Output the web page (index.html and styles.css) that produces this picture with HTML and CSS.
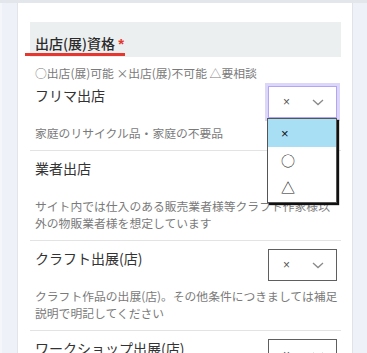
FILE: index.html
```html
<!DOCTYPE html>
<html lang="ja">
<head>
<meta charset="utf-8">
<title>出店(展)資格</title>
<link rel="stylesheet" href="styles.css">
</head>
<body>
<div class="topbar"></div>
<div class="layout">
  <div class="side"></div>
  <main class="card">
    <div class="heading"><span class="heading-text">出店(展)資格 <span class="req">*</span></span></div>
    <p class="note">○出店(展)可能 ×出店(展)不可能 △要相談</p>

    <div class="row first">
      <div class="row-main">
        <div class="label">フリマ出店</div>
        <div class="select-wrap">
          <div class="select focused"><span class="val">×</span><svg class="chev" width="12" height="7" viewBox="0 0 12 7"><path d="M1 1 L6 5.6 L11 1" fill="none" stroke="#8a8a8a" stroke-width="1.3"/></svg></div>
          <ul class="dropdown">
            <li class="opt active"><span class="x">×</span></li>
            <li class="opt">○</li>
            <li class="opt">△</li>
          </ul>
        </div>
      </div>
      <p class="desc">家庭のリサイクル品・家庭の不要品</p>
    </div>

    <div class="row">
      <div class="row-main">
        <div class="label">業者出店</div>
        <div class="select-wrap">
          <div class="select"><span class="val">×</span><svg class="chev" width="12" height="7" viewBox="0 0 12 7"><path d="M1 1 L6 5.6 L11 1" fill="none" stroke="#8a8a8a" stroke-width="1.3"/></svg></div>
        </div>
      </div>
      <p class="desc">サイト内では仕入のある販売業者様等クラフト作家様以外の物販業者様を想定しています</p>
    </div>

    <div class="row">
      <div class="row-main">
        <div class="label">クラフト出展(店)</div>
        <div class="select-wrap">
          <div class="select"><span class="val">×</span><svg class="chev" width="12" height="7" viewBox="0 0 12 7"><path d="M1 1 L6 5.6 L11 1" fill="none" stroke="#8a8a8a" stroke-width="1.3"/></svg></div>
        </div>
      </div>
      <p class="desc">クラフト作品の出展(店)。その他条件につきましては補足説明で明記してください</p>
    </div>

    <div class="row">
      <div class="row-main">
        <div class="label">ワークショップ出展(店)</div>
        <div class="select-wrap">
          <div class="select"><span class="val">×</span><svg class="chev" width="12" height="7" viewBox="0 0 12 7"><path d="M1 1 L6 5.6 L11 1" fill="none" stroke="#8a8a8a" stroke-width="1.3"/></svg></div>
        </div>
      </div>
    </div>
  </main>
</div>
</body>
</html>
```
FILE: styles.css
```css
* { box-sizing: border-box; }
html, body { margin: 0; padding: 0; }
body {
  background: #eef1f7;
  font-family: "Noto Sans CJK JP", "Noto Sans", sans-serif;
  color: #333;
  height: 353px;
  overflow: hidden;
}
.topbar { height: 3px; background: #e3e6eb; }
.layout { display: flex; height: 350px; }
.side {
  width: 18px;
  flex: none;
  background: #eef1f7;
  border-left: 2px solid #f4f6fa;
  border-right: 1px solid #e1e4ea;
}
.card {
  width: 335px;
  flex: none;
  background: #fff;
  border-right: 1px solid #dfe2e8;
  padding: 19px 11px 0 12px;
}
.heading {
  background: #eceff0;
  height: 35px;
  padding: 8px 5px 0;
}
.heading-text {
  display: inline-block;
  font-size: 14px;
  font-weight: 500;
  line-height: 18px;
  color: #2b2b2b;
  margin-left: -10px;
  padding: 0 1px 0 10px;
  border-bottom: 3px solid #e5372f;
}
.req { color: #e5372f; font-family: "Liberation Sans", sans-serif; font-size: 15px; font-weight: 700; }
.note {
  margin: 7px 0 0;
  padding: 0 5px;
  font-size: 11.8px;
  line-height: 18px;
  color: #7a7a7a;
}
.row {
  border-top: 1px solid #e3e3e3;
  padding: 8px 4px 9px 5px;
}
.row.first { border-top: none; padding-top: 4px; }
.row-main {
  display: flex;
  justify-content: space-between;
  align-items: flex-start;
}
.label {
  font-size: 14px;
  line-height: 18px;
  color: #333;
}
.select-wrap { position: relative; }
.select {
  width: 69px;
  height: 32px;
  border: 1px solid #5f5f5f;
  background: #fff;
  display: flex;
  align-items: center;
  padding: 0 12px 0 14px;
  justify-content: space-between;
}
.select.focused {
  border-color: #b3a5f3;
  box-shadow: 0 0 0 3px #ddd6fb;
}
.val { font-family: "Liberation Sans", sans-serif; font-size: 12px; color: #555; line-height: 1; }
.chev { display: block; }
.dropdown {
  position: absolute;
  left: -1px;
  top: 32px;
  width: 70px;
  margin: 0;
  padding: 0;
  list-style: none;
  background: #fff;
  border: 1px solid #555;
  box-shadow: 2px 2px 1px #111;
  z-index: 2;
}
.opt {
  height: 27.7px;
  line-height: 27.7px;
  padding-left: 13px;
  font-size: 14px;
  color: #222;
}
.opt .x { font-family: "Liberation Sans", sans-serif; font-size: 13px; color: #111; }
.opt.active { background: #a9dff5; }
.desc {
  margin: 6px -4px 0 0;
  font-size: 11.8px;
  line-height: 17px;
  color: #7a7a7a;
}
```
